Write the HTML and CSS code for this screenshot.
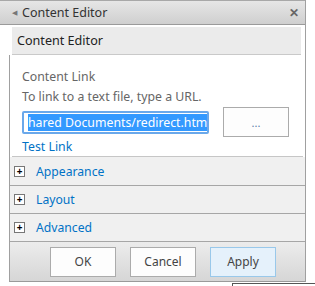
FILE: index.html
```html
<!DOCTYPE html>
<html lang="en">
<head>
  <meta charset="UTF-8" />
  <title>Content Editor</title>
  <link rel="stylesheet" href="styles.css">
</head>
<body>
  <div class="behind"></div>

  <div class="pane">
    <div class="titlebar">
      <span class="back">&#9664;</span>
      <span class="title">Content Editor</span>
      <span class="close">&#10005;</span>
    </div>

    <div class="subhead">Content Editor</div>

    <div class="box">
      <div class="content">
        <div class="label">Content Link</div>
        <div class="hint">To link to a text file, type a URL.</div>
        <div class="link-row">
          <div class="url-input"><span class="selected">hared Documents/redirect.htm</span></div>
          <button class="browse">...</button>
        </div>
        <a class="test-link" href="#">Test Link</a>
      </div>

      <div class="sections">
        <div class="section"><span class="plus">+</span><span class="section-name">Appearance</span></div>
        <div class="section"><span class="plus">+</span><span class="section-name">Layout</span></div>
        <div class="section"><span class="plus">+</span><span class="section-name">Advanced</span></div>
      </div>

      <div class="footer">
        <button class="btn">OK</button>
        <button class="btn">Cancel</button>
        <button class="btn btn-apply">Apply</button>
      </div>
    </div>
  </div>
</body>
</html>
```

FILE: styles.css
```css
body {
  margin: 0;
  background: #fff;
  font-family: 'Noto Sans', sans-serif;
  color: #444;
  position: relative;
  height: 286px;
  overflow: hidden;
}

/* bit of the page behind the tool pane */
.behind {
  position: absolute;
  left: 232px;
  top: 283px;
  right: 0;
  bottom: 0;
  border-top: 1px solid #555;
  border-left: 1px solid #555;
}

.pane {
  width: 305px;
  border-right: 1px solid #a0a0a0;
}

.titlebar {
  height: 23px;
  border-top: 1px solid #a8a8a8;
  border-bottom: 1px solid #9a9a9a;
  background: linear-gradient(#e6e6e6, #cfcfcf);
  display: flex;
  align-items: center;
  padding: 0 6px 0 12px;
  font-size: 12.5px;
  color: #333;
}
.back {
  font-size: 7px;
  color: #777;
  margin-right: 5px;
}
.title {
  flex: 1;
}
.close {
  font-size: 12px;
  font-weight: bold;
  color: #666;
}

.subhead {
  margin: 2px 4px 0 12px;
  height: 27px;
  line-height: 27px;
  padding-left: 5px;
  background: #ebebeb;
  border-bottom: 1px solid #c9c9c9;
  font-size: 12.6px;
  color: #222;
}

.box {
  margin-left: 9px;
  border-left: 1px solid #a0a0a0;
  border-bottom: 1px solid #9a9a9a;
}

.content {
  margin: 0 2px;
  padding: 12px 0 0 10px;
  height: 89px;
  font-size: 12.3px;
  border-bottom: 1px solid #c6c6c6;
}
.label,
.hint {
  line-height: 20px;
  color: #666;
}
.link-row {
  display: flex;
  align-items: center;
  gap: 14px;
  height: 30px;
}
.url-input {
  width: 179px;
  height: 19px;
  border: 2px solid #6aa8ea;
  border-radius: 2px;
  overflow: hidden;
  white-space: nowrap;
  display: flex;
  align-items: center;
  padding-left: 4px;
}
.selected {
  background: #3399ff;
  color: #fff;
  line-height: 17px;
}
.browse {
  width: 66px;
  height: 30px;
  border: 1px solid #ababab;
  background: #fdfdfd;
  color: #5b7fa8;
  font-family: inherit;
  font-size: 11px;
  padding: 0;
}
.test-link {
  display: block;
  line-height: 20px;
  color: #0072c6;
  text-decoration: none;
}

.sections {
  background: #f0f0f0;
  padding-top: 1px;
}
.section {
  height: 27px;
  border-bottom: 1px solid #a6a6a6;
  display: flex;
  align-items: center;
  padding-left: 4px;
}
.plus {
  width: 9px;
  height: 9px;
  border: 1px solid #777;
  background: #fff;
  color: #000;
  font-size: 10px;
  line-height: 8px;
  text-align: center;
  font-weight: bold;
  margin-right: 11px;
}
.section-name {
  font-size: 12.2px;
  color: #0072c6;
}

.footer {
  height: 39px;
  background: linear-gradient(#ececec, #d6d6d6);
  display: flex;
  align-items: center;
  padding-left: 40px;
  gap: 14px;
}
.btn {
  width: 66px;
  height: 30px;
  border: 1px solid #ababab;
  background: #fdfdfd;
  font-family: inherit;
  font-size: 12px;
  color: #444;
  padding: 0;
}
.btn-apply {
  background: #e5f1fb;
  border-color: #99c8ea;
}
```
